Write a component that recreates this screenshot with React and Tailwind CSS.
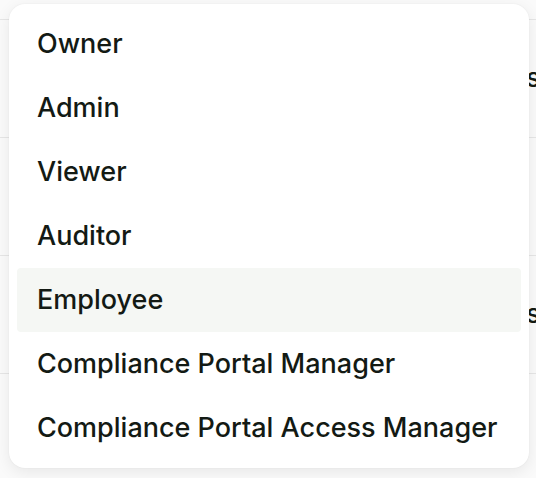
import React from "react";

const roles = [
  "Owner",
  "Admin",
  "Viewer",
  "Auditor",
  "Employee",
  "Compliance Portal Manager",
  "Compliance Portal Access Manager",
];

export default function App() {
  return (
    <div
      className="relative h-[478px] w-[536px] overflow-hidden bg-[#fafafa]"
      style={{ fontFamily: "Inter, 'Liberation Sans', sans-serif" }}
    >
      {/* table underneath the menu */}
      <div className="pt-[19px]">
        {[0, 1, 2, 3].map((i) => (
          <div
            key={i}
            className="flex h-[118px] items-center border-t border-[#e6e6e6] pl-[526px] text-[27px] font-medium text-[#131a14]"
          >
            {i % 2 === 0 ? "s" : ""}
          </div>
        ))}
      </div>

      {/* dropdown menu */}
      <div className="absolute left-[9px] top-[4px] w-[520px] rounded-2xl bg-white p-2 shadow-[0_4px_16px_rgba(0,0,0,0.08),0_0_2px_rgba(0,0,0,0.06)]">
        {roles.map((role) => (
          <div
            key={role}
            className={
              "flex h-16 items-center rounded-sm pl-5 text-[27px] font-medium text-[#131a14] " +
              (role === "Employee" ? "bg-[#f5f7f4]" : "")
            }
          >
            {role}
          </div>
        ))}
      </div>
    </div>
  );
}
